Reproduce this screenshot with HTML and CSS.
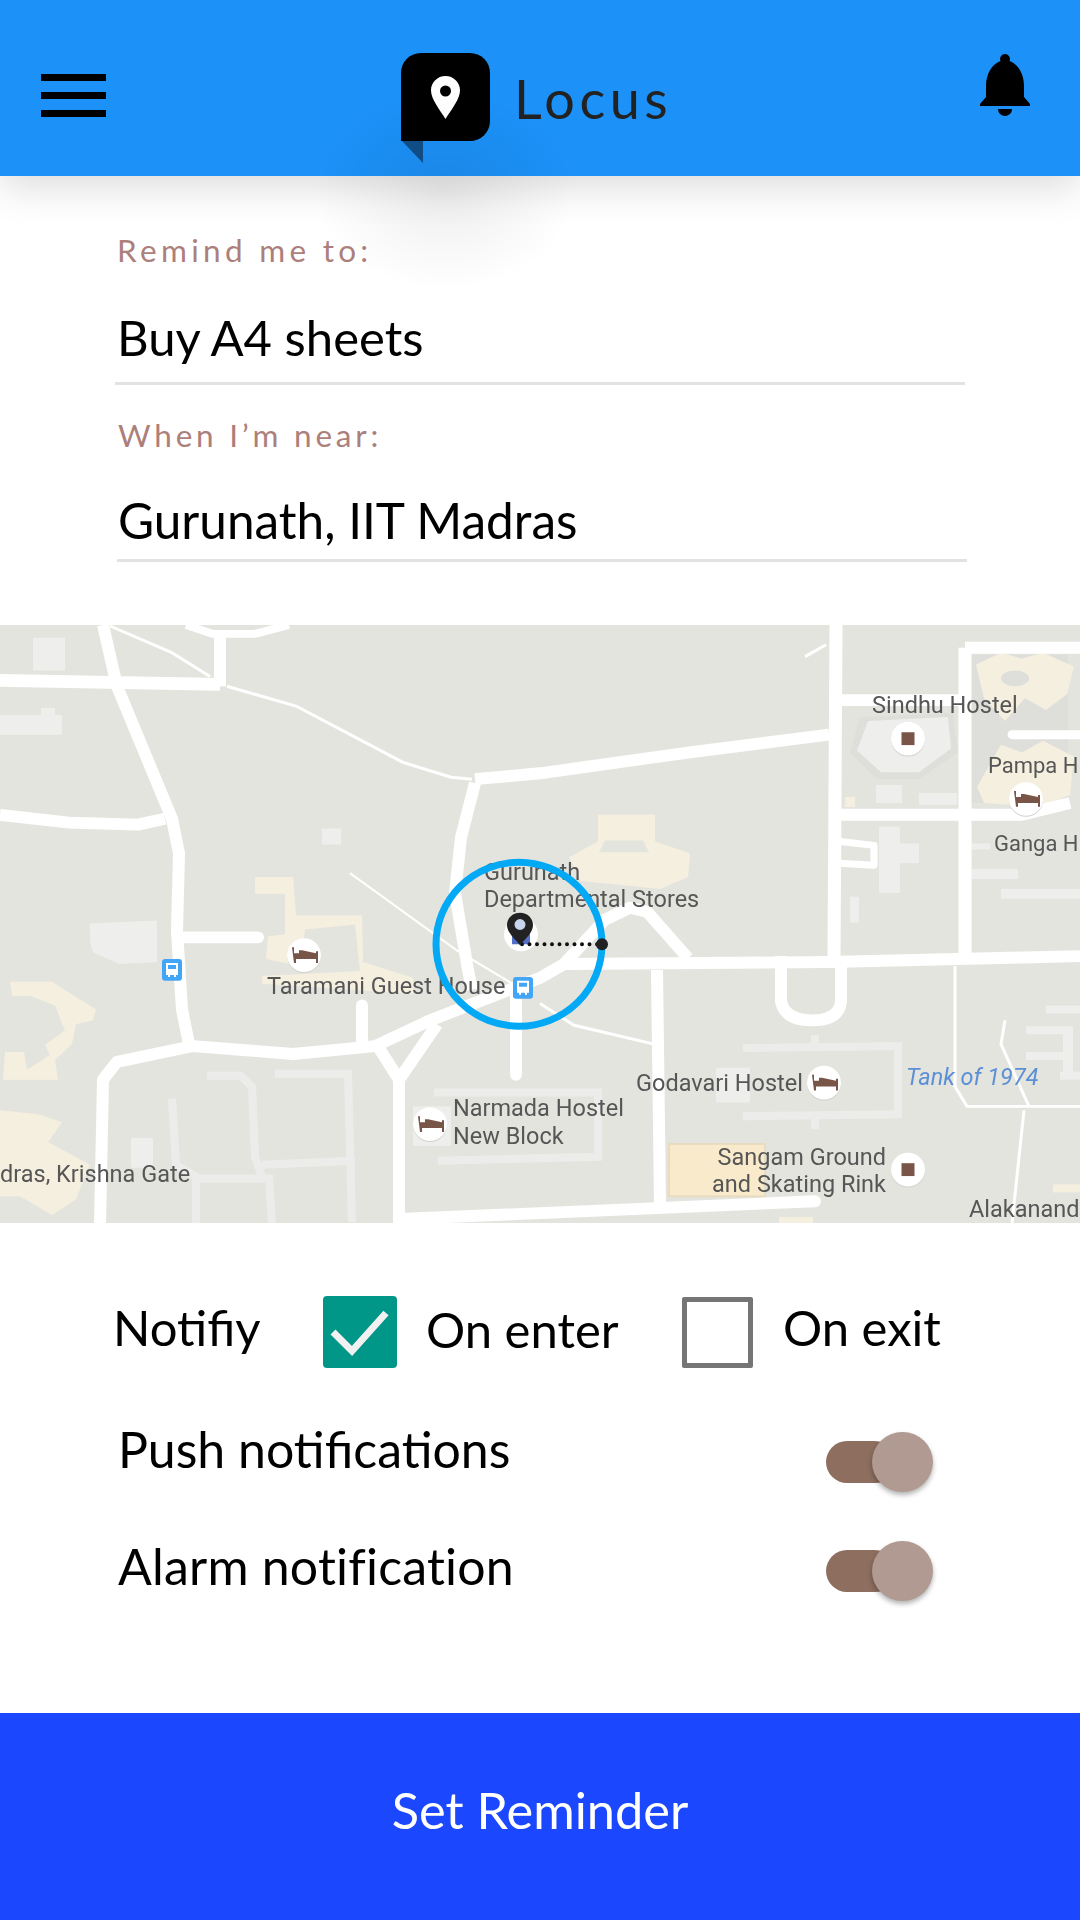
FILE: index.html
```html
<!DOCTYPE html>
<html lang="en">
<head>
    <meta charset="UTF-8">
    <meta name="viewport" content="width=device-width, initial-scale=1.0">
    <title>Locus - Set Reminder</title>
    <link rel="stylesheet" href="styles.css">
</head>
<body>
    <div id="app">
        <header class="topbar">
            <div class="menu"><span></span><span></span><span></span></div>
            <div class="brand">
                <svg class="brand-mark" width="90" height="110" viewBox="0 0 90 110">
                    <path d="M1 88h21v22z" fill="#11508a"/>
                    <path d="M20 0h49a20 20 0 0 1 20 20v48a20 20 0 0 1-20 20H0V20A20 20 0 0 1 20 0z" fill="#000"/>
                    <path d="M44.500 23c8 0 14.500 6.300 14.500 14.200 0 9-8.500 19-14.500 28.800C38.500 56.200 30 46.200 30 37.200 30 29.300 36.500 23 44.500 23z" fill="#fff"/>
                    <circle cx="44.500" cy="38" r="5.500" fill="#000"/>
                </svg>
                <span class="brand-name">Locus</span>
            </div>
            <svg class="bell" width="50" height="62" viewBox="0 0 50 62">
                <path d="M25 0a5 5 0 0 1 4.500 7C38 10 44 20 44 32v11l6 7v2H0v-2l6-7V32C6 20 12 10 20.500 7A5 5 0 0 1 25 0z" fill="#000"/>
                <path d="M18 55h14a7 7 0 0 1-14 0z" fill="#000"/>
            </svg>
        </header>
        <div class="header-glow"></div>

        <section class="form">
            <div class="field field-task">
                <label>Remind me to:</label>
                <div class="value">Buy A4 sheets</div>
            </div>
            <div class="field field-place">
                <label>When I’m near:</label>
                <div class="value">Gurunath, IIT Madras</div>
            </div>
        </section>

        <svg class="map" viewBox="0 625 1080 605" preserveAspectRatio="none">
            <defs>
                <g id="bed">
                    <circle r="17" cy="1" fill="#d0d0cc"/>
                    <circle r="17" fill="#fff"/>
                    <path d="M-12-8h2v6h5v-3h3l14 3v-2h2v12h-2V4h-20v4h-2z" fill="#795548"/>
                </g>
                <g id="shop">
                    <circle r="17" cy="1" fill="#d0d0cc"/>
                    <circle r="17" fill="#fff"/>
                    <rect x="-6.500" y="-6.500" width="13" height="13" fill="#795548"/>
                </g>
                <g id="bus">
                    <rect x="-10" y="-11" width="20" height="22" rx="3" fill="#42a5f5"/>
                    <path d="M-6-7H6V5H4v2H2V5h-4v2h-2V5h-2zM-4-5v4H4v-4z" fill="#fff"/>
                </g>
            </defs>
            <g class="map-art">
                <rect x="0" y="625" width="1080" height="605" fill="#e4e4df"/>

                <g fill="#eeeeec">
                    <rect x="33" y="638" width="32" height="33"/>
                    <rect x="0" y="716" width="62" height="20"/>
                    <rect x="41" y="709" width="14" height="8"/>
                    <path d="M90 927l67-3v42l-38 2-26-12-3-10z"/>
                    <rect x="322" y="831" width="19" height="16"/>
                    <rect x="131" y="1144" width="22" height="30"/>
                    <rect x="413" y="1112" width="38" height="40"/>
                    <rect x="716" y="1073" width="34" height="35"/>
                    <rect x="876" y="787" width="26" height="18"/>
                    <rect x="919" y="795" width="38" height="12"/>
                    <rect x="879" y="829" width="21" height="67"/>
                    <rect x="900" y="846" width="19" height="20"/>
                    <rect x="850" y="900" width="9" height="26"/>
                    <rect x="970" y="872" width="48" height="10"/>
                    <rect x="1001" y="892" width="79" height="10"/>
                    <rect x="970" y="846" width="20" height="6"/>
                    <rect x="1026" y="1031" width="45" height="8"/>
                    <rect x="1026" y="1057" width="45" height="8"/>
                    <rect x="1046" y="1010" width="34" height="8"/>
                    <rect x="1060" y="1077" width="20" height="8"/>
                    <rect x="1063" y="1031" width="10" height="50"/>
                </g>
                <g fill="none" stroke="#ececea" stroke-width="8">
                    <path d="M207 1081h34l11 11 3 71 7 20"/>
                    <path d="M275 1079h73l4 150"/>
                    <path d="M262 1171l93-4"/>
                    <path d="M172 1104l4 67 20 12v47"/>
                    <path d="M196 1185h73l3 45"/>
                    <path d="M434 1098h164v65l-160 4"/>
                    <path d="M743 1053l155-2v69l-155 2"/>
                    <path d="M815 1040v13M815 1122v13"/>
                </g>

                <g fill="#dededb">
                    <path d="M860 718l93-4 5 40-39 27h-42l-27-27z"/>
                    <path d="M968 655h100v150H968z"/>
                </g>
                <path d="M868 722l80-4 3 32-32 24h-38l-24-22z" fill="#eeeeec"/>
                <g fill="#f5efdf">
                    <path d="M598 817h57v27h-57zM569 860l29-16h57l35 12-2 24-28 12-79-8z"/>
                    <path d="M255 880h38l3 39h66l1 47 50 16v16l-151-10v-8l98-5-5-47-50 5-5 37-34-7 2-23 17-2v-41h-30z"/>
                    <path d="M10 986h42l44 28-3 11-17 4-4 20-17 16 3 20H3l2-28h19l3 18 23-15-5-10 20-15-10-25-25-10H12z"/>
                    <path d="M0 1116l38 4 24 8-14 20 42 23-14 35-24 16-32-19H0z"/>
                    <path d="M976 665l25-12 21 6 21-6 31 14-7 28-21 16-21-12-20 23-21-23z"/>
                    <path d="M977 789l24-43 21 8 21-12 31 16-4 39-31 12-55-4z"/>
                    <rect x="845" y="799" width="10" height="10"/>
                    <rect x="1053" y="1191" width="27" height="8"/>
                    <rect x="779" y="1224" width="34" height="6"/>
                </g>
                <path d="M605 843h38l6 12h-50z" fill="#e4e4df"/>
                <ellipse cx="1015" cy="679" rx="14" ry="8" fill="#dededb"/>
                <rect x="669" y="1150" width="96" height="53" fill="#f8eacb" stroke="#e8dcc0" stroke-width="2"/>

                <g fill="none" stroke="#fff" stroke-linejoin="round">
                    <g stroke-width="13">
                        <path d="M0 681l220 4"/>
                        <path d="M836 625l-2 337"/>
                        <path d="M965 648v310"/>
                    </g>
                    <g stroke-width="12">
                        <path d="M103 625l14 62 55 134 7 35-2 79 5 79 7 35"/>
                        <path d="M220 634v53"/>
                        <path d="M0 817l69 8 69 2 27-6"/>
                        <path d="M475 781l65-6 148-21 141-18"/>
                        <path d="M475 785l-14 55-6 56 13 78 4 20"/>
                        <path d="M182 941h76" stroke-linecap="round"/>
                        <path d="M100 1232l3-147 14-18 76-16 100 8 82-8 55-26 110-43 24-14 265-2 251-6"/>
                        <path d="M362 1010v39" stroke-linecap="round"/>
                        <path d="M379 1053l20 32 38-56"/>
                        <path d="M399 1085v147"/>
                        <path d="M516 1000v80" stroke-linecap="round"/>
                        <path d="M399 1226l141-6 275-12" stroke-linecap="round"/>
                        <path d="M657 974l3 236"/>
                        <path d="M564 968l41-45 25-12 17 4 41 47"/>
                        <path d="M781 960v46q4 19 31 19t29-19v-46"/>
                        <path d="M965 648h115"/>
                        <path d="M840 701h123"/>
                        <path d="M840 817h182l48-12"/>
                    </g>
                    <path d="M186 625l27 9h42l34-9" stroke-width="8"/>
                    <path d="M840 844l34 4v20l-34-2" stroke-width="7"/>
                    <path d="M1012 736h68" stroke-width="9" stroke-linecap="round"/>
                    <g stroke-width="3">
                        <path d="M227 687l69 20 107 57 48 15 21 2"/>
                        <path d="M955 970v122l12 20h113"/>
                        <path d="M1024 1116l-12 114"/>
                        <path d="M1005 1025l-4 24 28 63"/>
                        <path d="M805 657l21-12"/>
                        <path d="M110 626l62 27 38 24"/>
                        <path d="M540 1008l34 22 80 19"/>
                        <path d="M350 876l108 79 58 35" stroke-width="2"/>
                    </g>
                </g>

                <use href="#bed" x="304" y="959"/>
                <use href="#bed" x="430" y="1130"/>
                <use href="#bed" x="824" y="1088"/>
                <use href="#bed" x="1026" y="801"/>
                <use href="#shop" x="908" y="740"/>
                <use href="#shop" x="908" y="1176"/>
                <use href="#bus" x="172" y="974"/>
                <use href="#bus" x="523" y="992"/>
                <circle cx="521" cy="938" r="17" fill="#fff"/>
                <rect x="512" y="936" width="18" height="12" fill="#5470c6"/>

                <g class="map-labels">
                    <text x="267" y="998">Taramani Guest House</text>
                    <text x="484" y="883">Gurunath</text>
                    <text x="484" y="910">Departmental Stores</text>
                    <text x="872" y="714">Sindhu Hostel</text>
                    <text class="edge" x="988" y="775">Pampa H</text>
                    <text class="edge" x="994" y="854">Ganga H</text>
                    <text x="636" y="1096">Godavari Hostel</text>
                    <text x="453" y="1122">Narmada Hostel</text>
                    <text x="453" y="1150">New Block</text>
                    <text x="886" y="1171" text-anchor="end">Sangam Ground</text>
                    <text x="886" y="1199" text-anchor="end">and Skating Rink</text>
                    <text x="969" y="1224">Alakanand</text>
                    <text x="0" y="1189">dras, Krishna Gate</text>
                    <text class="water" x="906" y="1090">Tank of 1974</text>
                </g>
            </g>

            <!-- radius picker -->
            <circle cx="519" cy="948" r="83" fill="none" stroke="#03a9f4" stroke-width="7"/>
            <path d="M522 948h78" fill="none" stroke="#111" stroke-width="4" stroke-linecap="round" stroke-dasharray="0 7.500"/>
            <circle cx="602" cy="948" r="6" fill="#222"/>
            <path d="M520 916c7.500 0 13 5.500 13 12.500 0 7.500-7 13-13 20.500-6-7.500-13-13-13-20.500 0-7 5.500-12.500 13-12.500z" fill="#222"/>
            <circle cx="520" cy="928" r="5.500" fill="#c9d4ef"/>
        </svg>

        <section class="options">
            <div class="notify-row">
                <span class="opt-text notify-label">Notifiy</span>
                <div class="notify-opt notify-enter">
                    <span class="check check-on">
                        <svg width="74" height="72" viewBox="0 0 74 72"><path d="M10 36l19 19L63 17" fill="none" stroke="#f1f1f1" stroke-width="7"/></svg>
                    </span>
                    <span class="opt-text">On enter</span>
                </div>
                <div class="notify-opt notify-exit">
                    <span class="check check-off"></span>
                    <span class="opt-text">On exit</span>
                </div>
            </div>
            <div class="toggle-row row-push">
                <span class="opt-text">Push notifications</span>
                <span class="toggle"><span class="thumb"></span></span>
            </div>
            <div class="toggle-row row-alarm">
                <span class="opt-text">Alarm notification</span>
                <span class="toggle"><span class="thumb"></span></span>
            </div>
        </section>

        <div class="submit">Set Reminder</div>
    </div>
</body>
</html>
```

FILE: styles.css
```css
html, body {
    margin: 0;
    padding: 0;
    background-color: #fff;
}
#app {
    position: relative;
    width: 1080px;
    height: 1920px;
    overflow: hidden;
    display: flex;
    flex-direction: column;
    font-family: Lato, "Open Sans", sans-serif;
    color: #000;
}
.topbar {
    position: relative;
    height: 176px;
    flex: none;
    display: flex;
    align-items: flex-start;
    padding: 0 50px 0 41px;
    background-color: #1c91f8;
    box-shadow: 0 8px 40px rgba(0, 0, 0, 0.16);
}
.menu {
    width: 65px;
    margin-top: 74px;
    display: flex;
    flex-direction: column;
    gap: 11px;
}
.menu span {
    height: 7px;
    background-color: #000;
}
.brand {
    display: flex;
    align-items: flex-start;
    margin-left: 295px;
    margin-top: 53px;
}
.brand-mark {
    display: block;
}
.brand-name {
    margin-left: 23px;
    margin-top: 14px;
    font-size: 54px;
    line-height: 64px;
    font-weight: 400;
    letter-spacing: 4.500px;
    color: #222;
}
.bell {
    margin-left: auto;
    margin-top: 54px;
}
.header-glow {
    position: absolute;
    left: 315px;
    top: 90px;
    width: 260px;
    height: 200px;
    background: radial-gradient(closest-side, rgba(0, 0, 0, 0.07), rgba(0, 0, 0, 0));
    pointer-events: none;
}
.form {
    flex: none;
    height: 449px;
    box-sizing: border-box;
    padding-top: 54px;
}
.field label {
    display: block;
    font-size: 31.5px;
    line-height: 40px;
    font-weight: 400;
    letter-spacing: 4px;
    color: #ad7f7c;
}
.field .value {
    font-size: 49.5px;
    line-height: 60px;
    border-bottom: 3px solid #e2e2e2;
}
.field-task {
    width: 850px;
    margin-left: 115px;
}
.field-task label,
.field-task .value {
    padding-left: 2px;
}
.field-task label {
    letter-spacing: 4.300px;
}
.field-task .value {
    margin-top: 37px;
    padding-bottom: 15px;
    font-size: 49px;
}
.field-place {
    width: 850px;
    margin-left: 117px;
    margin-top: 30px;
}
.field-place label,
.field-place .value {
    padding-left: 1px;
}
.field-place label {
    letter-spacing: 3.800px;
}
.field-place .value {
    margin-top: 35px;
    padding-bottom: 9px;
}
.map {
    flex: none;
    display: block;
    width: 1080px;
    height: 598px;
}
.map-art {
    filter: blur(0.7px);
}
.map-labels text {
    font-family: Roboto, sans-serif;
    font-size: 23.5px;
    fill: #565656;
}
.map-labels .edge {
    font-size: 22px;
}
.map-labels .water {
    font-style: italic;
    fill: #5b8fd6;
}
.options {
    flex: none;
    padding: 72px 147px 0 113px;
}
.opt-text {
    font-size: 49px;
    line-height: 60px;
    white-space: nowrap;
}
.notify-row {
    display: grid;
    grid-template-columns: 210px 359px 1fr;
    align-items: center;
    height: 73px;
}
.notify-label {
    margin-top: -10px;
}
.notify-enter .opt-text {
    margin-top: -6px;
}
.notify-exit .opt-text {
    margin-top: -12px;
}
.notify-opt {
    display: flex;
    align-items: center;
    gap: 29px;
}
.notify-exit {
    gap: 30px;
    margin-top: 2px;
}
.check {
    flex: none;
    display: block;
    box-sizing: border-box;
}
.check-on {
    width: 74px;
    height: 72px;
    border-radius: 4px;
    background-color: #009688;
}
.check svg {
    display: block;
}
.check-off {
    width: 71px;
    height: 71px;
    border: 5px solid #757575;
    border-radius: 2px;
}
.toggle-row {
    display: flex;
    justify-content: space-between;
    align-items: flex-start;
    padding-left: 5px;
    height: 60px;
}
.toggle-row .opt-text {
    font-size: 50px;
}
.row-push {
    margin-top: 64px;
}
.row-push .opt-text {
    margin-top: -13px;
}
.row-alarm {
    margin-top: 49px;
}
.row-alarm .opt-text {
    margin-top: -5px;
    letter-spacing: 0.200px;
}
.toggle {
    position: relative;
    width: 107px;
    margin-top: 9px;
    height: 42px;
}
.toggle::before {
    content: "";
    position: absolute;
    left: 0;
    top: 0;
    width: 70px;
    height: 42px;
    border-radius: 21px;
    background-color: #8d6e5f;
}
.thumb {
    position: absolute;
    right: 0;
    top: -9px;
    width: 61px;
    height: 60px;
    border-radius: 50%;
    background-color: #b09a91;
    box-shadow: 0 3px 5px rgba(0, 0, 0, 0.3);
}
.submit {
    margin-top: auto;
    height: 207px;
    box-sizing: border-box;
    padding-bottom: 14px;
    flex: none;
    display: flex;
    align-items: center;
    justify-content: center;
    background-color: #1b47ff;
    color: #fff;
    font-size: 50.5px;
}
```
